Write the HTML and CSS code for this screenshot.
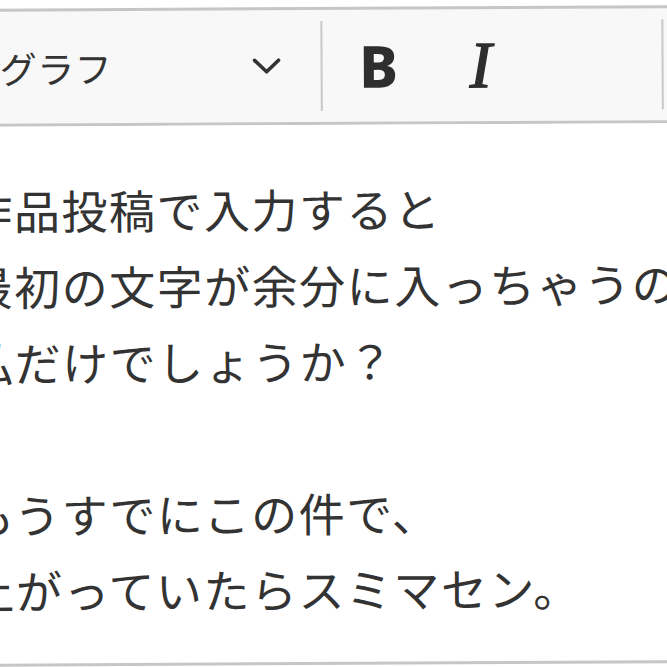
FILE: index.html
```html
<!DOCTYPE html>
<html lang="ja">
<head>
<meta charset="utf-8">
<title>エディタ</title>
<link rel="stylesheet" href="styles.css">
</head>
<body>
<div class="editor">
  <div class="toolbar">
    <div class="heading-dropdown">
      <span class="heading-label">パラグラフ</span>
      <svg class="chevron" width="30" height="18" viewBox="0 0 30 18"><polyline points="3,3 15,14.5 27,3" fill="none" stroke="#333" stroke-width="3.6" stroke-linecap="round" stroke-linejoin="round"/></svg>
    </div>
    <span class="separator"></span>
    <button class="tool-btn bold-btn">B</button>
    <button class="tool-btn italic-btn">I</button>
    <span class="separator separator-right"></span>
  </div>
  <div class="content">
    <p>作品投稿で入力すると<br>最初の文字が余分に入っちゃうのは<br>私だけでしょうか？</p>
    <p><br></p>
    <p>もうすでにこの件で、<br>上がっていたらスミマセン。</p>
  </div>
</div>
</body>
</html>
```
FILE: styles.css
```css
html, body {
  margin: 0;
  padding: 0;
  background: #ffffff;
  overflow: hidden;
  width: 667px;
  height: 667px;
}

body {
  font-family: "Noto Sans CJK JP", "Noto Sans", sans-serif;
  color: #333333;
}

.editor {
  width: 820px;
  margin-left: -80px;
  margin-top: 7px;
  transform: rotate(-0.3deg);
  transform-origin: 400px 330px;
}

.toolbar {
  display: flex;
  align-items: center;
  height: 112px;
  background: #f8f8f8;
  border-top: 3px solid #c6c6c6;
  border-bottom: 3px solid #c6c6c6;
}

.heading-dropdown {
  width: 402px;
  box-sizing: border-box;
  display: flex;
  align-items: center;
  justify-content: space-between;
  padding: 0 39px 0 6px;
  font-size: 37px;
  line-height: 1;
  color: #333333;
}

.heading-label {
  letter-spacing: 0.5px;
}

.chevron {
  display: block;
}

.separator {
  width: 2px;
  height: 90px;
  background: #c8c8c8;
  flex: none;
}

.separator-right {
  margin-left: 146px;
}

.tool-btn {
  width: 70px;
  height: 70px;
  padding: 0;
  border: none;
  background: transparent;
  color: #2e2e2e;
  display: flex;
  align-items: center;
  justify-content: center;
  line-height: 1;
}

.bold-btn {
  margin-left: 21px;
  font-family: "Noto Sans", "Open Sans", sans-serif;
  font-weight: 800;
  font-size: 58px;
}

.italic-btn {
  margin-left: 32px;
  font-family: "Liberation Serif", "DejaVu Serif", serif;
  font-style: italic;
  font-weight: 400;
  font-size: 66px;
  -webkit-text-stroke: 1.4px #2e2e2e;
}

.content {
  background: #ffffff;
  padding: 45px 0 36px 47px;
  border-bottom: 3px solid #c6c6c6;
  font-size: 46px;
  line-height: 76px;
  letter-spacing: 1.5px;
  white-space: nowrap;
}

.content p {
  margin: 0;
}
```
